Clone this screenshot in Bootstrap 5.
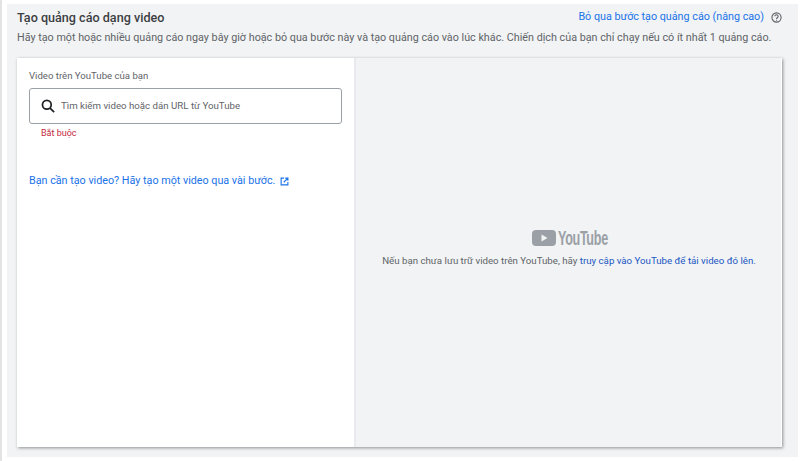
<!DOCTYPE html>
<html lang="vi">
<head>
    <meta charset="UTF-8">
    <meta name="viewport" content="width=device-width, initial-scale=1.0">
    <title>Tạo quảng cáo dạng video</title>
    <link href="https://cdn.jsdelivr.net/npm/bootstrap@5.3.0/dist/css/bootstrap.min.css" rel="stylesheet">
    <style>
        body {
            font-family: Roboto, "Noto Sans", sans-serif;
            background-color: #fff;
            height: 461px;
            overflow: hidden;
            border-left: 2px solid #e3e3e3;
            padding: 4px 2px 4px 5px;
        }
        .panel-wrap {
            background-color: #f1f3f4;
            height: 453px;
            padding: 3px 16px 10px 10px;
        }
        .head-row {
            height: 21px;
        }
        .panel-title {
            font-size: 12.6px;
            font-weight: 500;
            color: #3c4043;
            margin: 0;
        }
        .skip-group {
            gap: 7px;
        }
        .skip-link {
            font-size: 10.75px;
            color: #1a73e8;
            text-decoration: none;
        }
        .panel-desc {
            font-size: 10.77px;
            color: #5f6368;
            margin: 2px 0 12px;
            line-height: 16px;
            white-space: nowrap;
        }
        .video-box {
            height: 389px;
            background-color: #fff;
            box-shadow: 1px 1px 3px rgba(60, 64, 67, .55);
        }
        .left-pane {
            width: 337px;
            padding: 11px 12px;
        }
        .right-pane {
            background-color: #f1f3f4;
            border-left: 2px solid #e8eaed;
            box-shadow: inset -1px 0 0 #fff;
            padding-top: 170px;
        }
        .field-label {
            font-size: 9.6px;
            color: #5f6368;
            line-height: 14px;
            margin-bottom: 5px;
        }
        .search-box {
            height: 36px;
            border: 1px solid #9aa0a6;
            border-radius: 3px;
            padding-left: 11px;
        }
        .search-hint {
            font-size: 9.7px;
            color: #5f6368;
            margin-left: 6px;
        }
        .error-text {
            font-size: 9px;
            color: #c5283d;
            line-height: 14px;
            margin: 2px 0 0 12px;
        }
        .make-video {
            font-size: 10.75px;
            color: #1a73e8;
            text-decoration: none;
            line-height: 16px;
            margin-top: 33px;
            gap: 5px;
        }
        .yt-icon {
            margin-right: 2px;
        }
        .yt-word {
            font-family: "Liberation Sans", sans-serif;
            font-size: 20px;
            font-weight: 700;
            color: #9aa0a6;
            letter-spacing: -.5px;
            line-height: 20px;
            display: inline-block;
            width: 49px;
            transform: scaleX(.63);
            transform-origin: left center;
            white-space: nowrap;
        }
        .yt-note {
            font-size: 9.7px;
            color: #5f6368;
            line-height: 14px;
            margin-top: 6px;
            white-space: nowrap;
        }
        .yt-note a {
            color: #1a56c4;
            text-decoration: none;
        }
    </style>
</head>
<body>
    <div class="panel-wrap">
        <div class="head-row d-flex justify-content-between align-items-center">
            <h1 class="panel-title">Tạo quảng cáo dạng video</h1>
            <div class="skip-group d-flex align-items-center">
                <a class="skip-link" href="#">Bỏ qua bước tạo quảng cáo (nâng cao)</a>
                <svg width="11" height="11" viewBox="0 0 24 24" fill="none" stroke="#5f6368" stroke-width="2.4">
                    <circle cx="12" cy="12" r="10"/>
                    <path d="M8.5 9.5a3.5 3.5 0 1 1 5.5 3c-1.3.9-2 1.500-2 2.800"/>
                    <path d="M12 17v2"/>
                </svg>
            </div>
        </div>
        <p class="panel-desc">Hãy tạo một hoặc nhiều quảng cáo ngay bây giờ hoặc bỏ qua bước này và tạo quảng cáo vào lúc khác. Chiến dịch của bạn chỉ chạy nếu có ít nhất 1 quảng cáo.</p>
        <div class="video-box d-flex">
            <div class="left-pane d-flex flex-column align-items-start flex-shrink-0">
                <div class="field-label">Video trên YouTube của bạn</div>
                <div class="search-box d-flex align-items-center w-100">
                    <svg width="14" height="14" viewBox="0 0 24 24" fill="none" stroke="#202124" stroke-width="3">
                        <circle cx="10" cy="10" r="7.500"/>
                        <path d="M15.500 15.500l7 7"/>
                    </svg>
                    <span class="search-hint">Tìm kiếm video hoặc dán URL từ YouTube</span>
                </div>
                <div class="error-text">Bắt buộc</div>
                <a class="make-video d-flex align-items-center" href="#">
                    <span>Bạn cần tạo video? Hãy tạo một video qua vài bước.</span>
                    <svg width="9" height="9" viewBox="0 0 24 24" fill="none" stroke="#1a73e8" stroke-width="3">
                        <path d="M11 3H3v18h18v-8"/>
                        <path d="M14 3h7v7M21 3L10 14"/>
                    </svg>
                </a>
            </div>
            <div class="right-pane flex-grow-1 d-flex flex-column align-items-center">
                <div class="d-flex align-items-center">
                    <svg class="yt-icon" width="24" height="16" viewBox="0 0 24 16">
                        <rect width="24" height="16" rx="4" fill="#9aa0a6"/>
                        <path d="M9.500 4.500v7l6-3.500z" fill="#f1f3f4"/>
                    </svg>
                    <span class="yt-word">YouTube</span>
                </div>
                <div class="yt-note">Nếu bạn chưa lưu trữ video trên YouTube, hãy <a href="#">truy cập vào YouTube để tải video đó lên.</a></div>
            </div>
        </div>
    </div>
    <script src="https://cdn.jsdelivr.net/npm/bootstrap@5.3.0/dist/js/bootstrap.bundle.min.js"></script>
</body>
</html>
